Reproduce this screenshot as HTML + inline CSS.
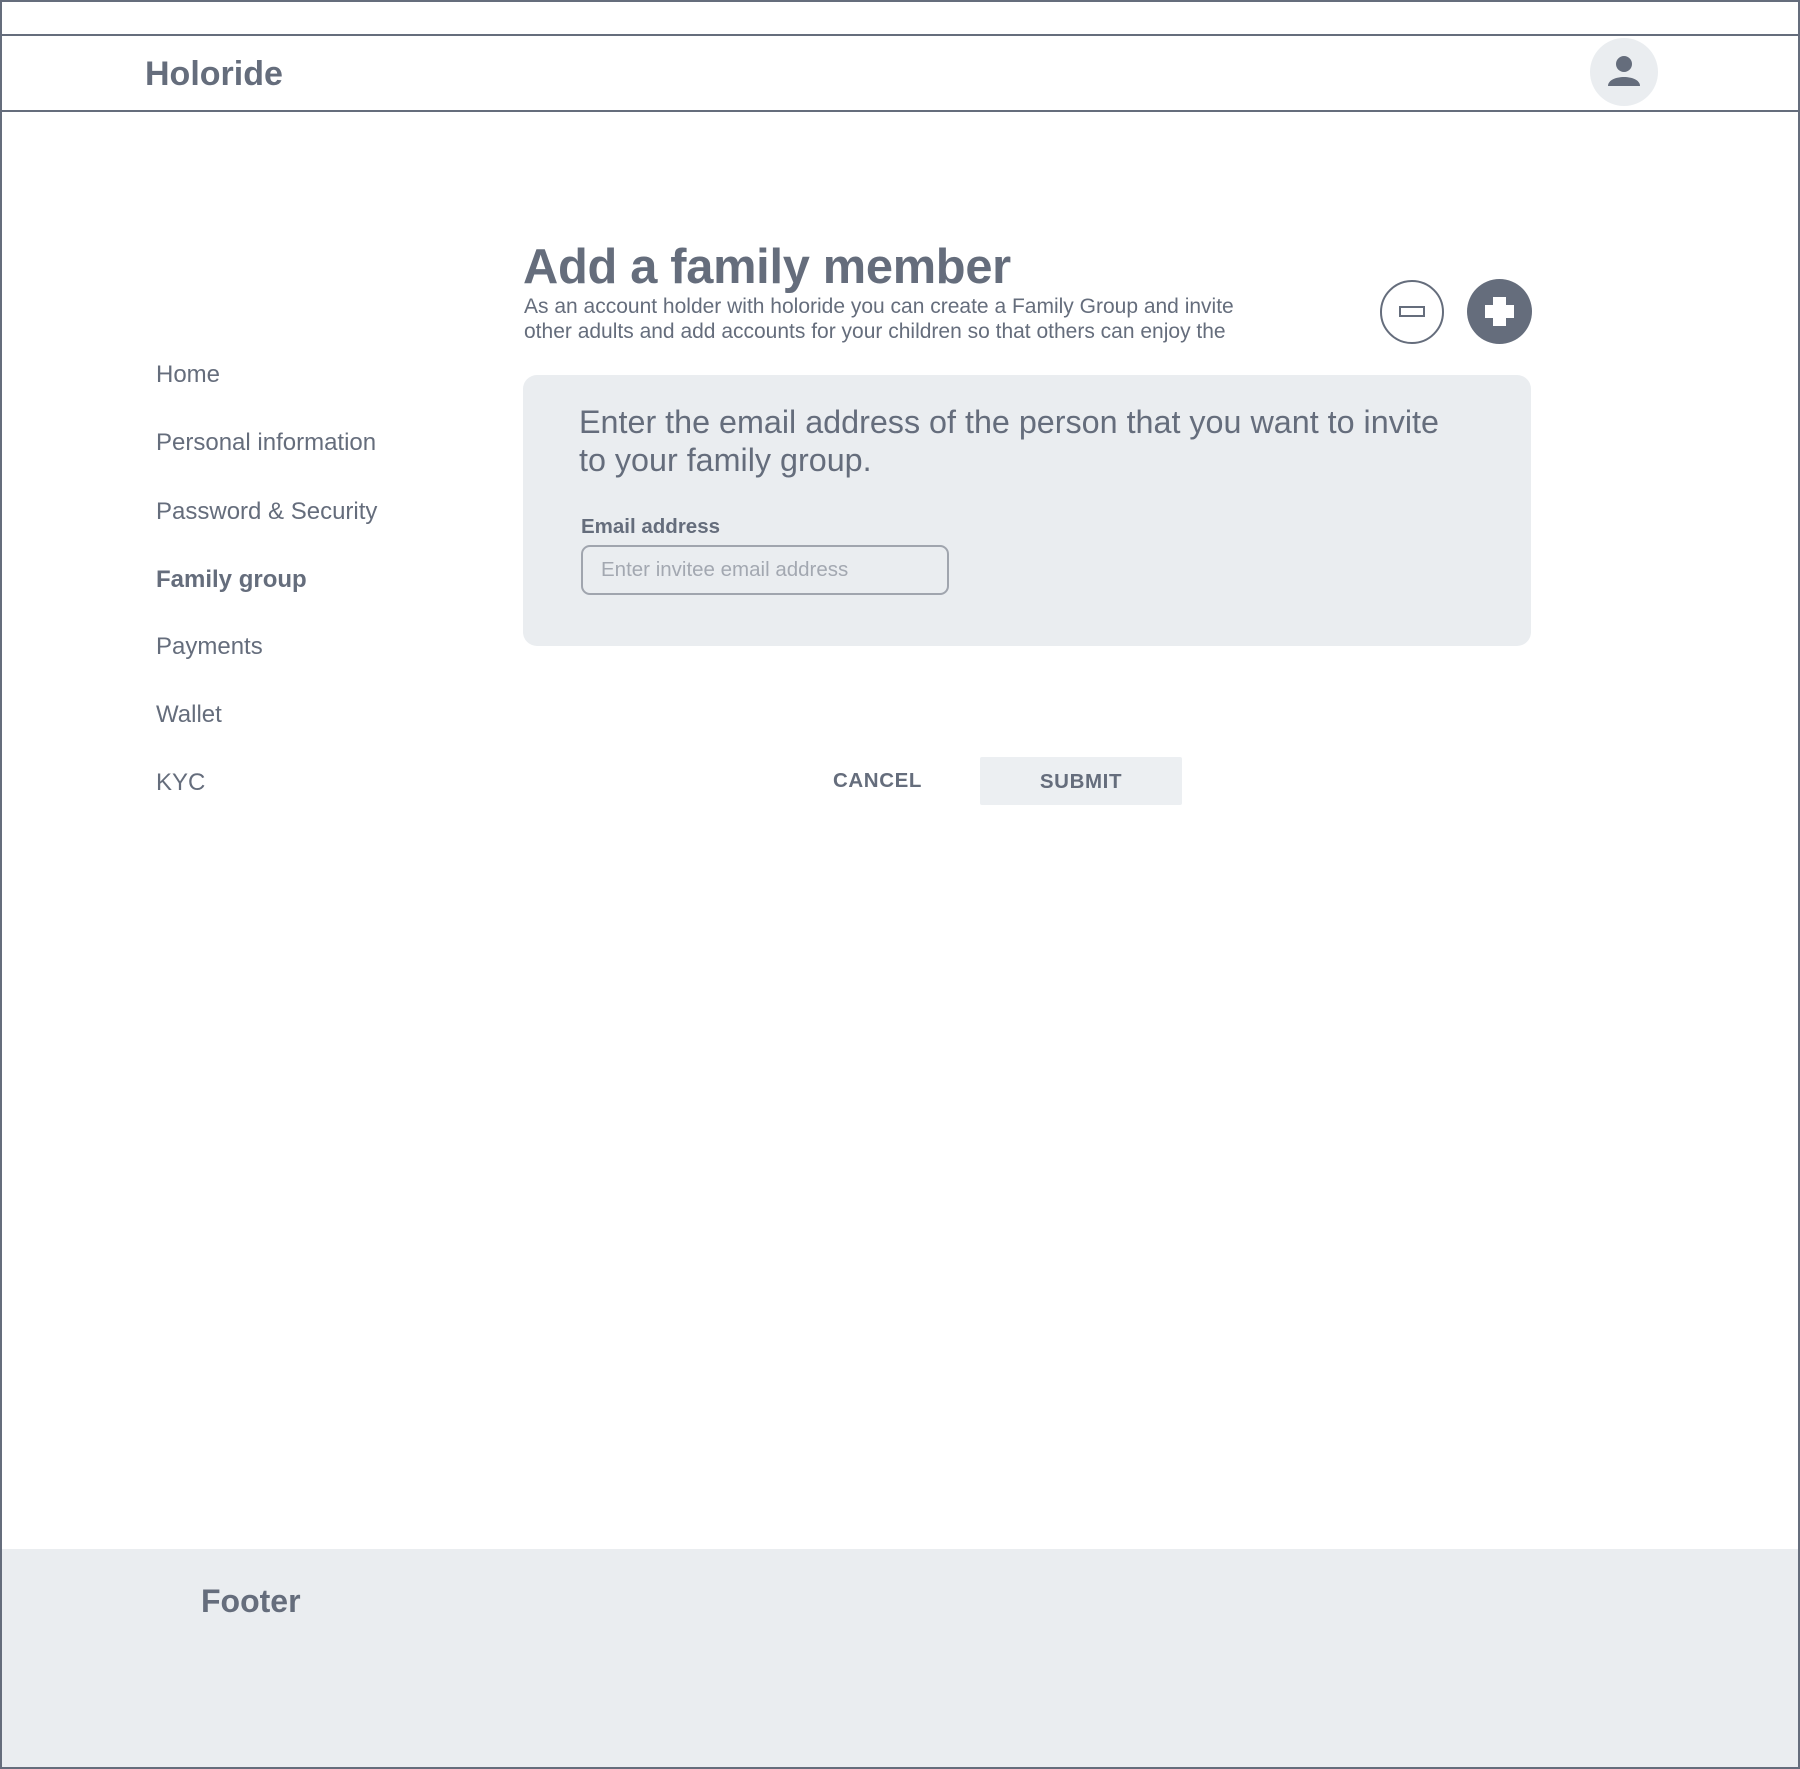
<!DOCTYPE html>
<html><head><meta charset="utf-8"><style>
*{margin:0;padding:0;box-sizing:border-box}
body{width:1800px;height:1769px;position:relative;background:#fff;font-family:"Liberation Sans",Arial,sans-serif;color:#656d7c;overflow:hidden}
.a{position:absolute;white-space:nowrap}
.frame{position:absolute;left:0;top:0;width:1800px;height:1769px;border:2px solid #656d7c}
.hl{position:absolute;left:0;width:1800px;height:2px;background:#656d7c}
.nav{position:absolute;left:156px;font-size:24px;line-height:28px}
</style></head><body>
<div class="a" style="left:0;top:1549px;width:1800px;height:220px;background:#eaedf0"></div>
<div class="frame"></div>
<div class="hl" style="top:34px"></div>
<div class="hl" style="top:110px"></div>
<div class="a" style="left:145px;top:54px;font-size:34px;font-weight:bold;line-height:40px">Holoride</div>
<div class="a" style="left:1590px;top:38px;width:68px;height:68px;border-radius:50%;background:#eaedf0"></div>
<svg class="a" style="left:1604px;top:52px" width="40" height="40" viewBox="0 0 40 40"><circle cx="20" cy="12" r="8" fill="#656d7c"/><path d="M4 34 C4 22 36 22 36 34 Z" fill="#656d7c"/></svg>

<div class="a" style="left:523px;top:239px;font-size:48.8px;font-weight:bold;line-height:56px;letter-spacing:-0.3px">Add a family member</div>
<div class="a" style="left:524px;top:294px;font-size:21px;line-height:25px">As an account holder with holoride you can create a Family Group and invite<br>other adults and add accounts for your children so that others can enjoy the</div>
<div class="a" style="left:1380px;top:280px;width:64px;height:64px;border-radius:50%;border:2px solid #656d7c"></div>
<div class="a" style="left:1399px;top:306px;width:26px;height:11px;border:2px solid #656d7c"></div>
<div class="a" style="left:1467px;top:279px;width:65px;height:65px;border-radius:50%;background:#656d7c"></div>
<div class="a" style="left:1493px;top:297px;width:13px;height:29px;background:#fff"></div>
<div class="a" style="left:1485px;top:305px;width:29px;height:13px;background:#fff"></div>

<div class="nav" style="top:361px">Home</div>
<div class="nav" style="top:429px">Personal information</div>
<div class="nav" style="top:498px">Password &amp; Security</div>
<div class="nav" style="top:566px;font-weight:bold">Family group</div>
<div class="nav" style="top:633px">Payments</div>
<div class="nav" style="top:701px">Wallet</div>
<div class="nav" style="top:769px">KYC</div>

<div class="a" style="left:523px;top:375px;width:1008px;height:271px;background:#eaedf0;border-radius:14px"></div>
<div class="a" style="left:579px;top:403px;font-size:32.3px;line-height:38px">Enter the email address of the person that you want to invite<br>to your family group.</div>
<div class="a" style="left:581px;top:514px;font-size:20.5px;font-weight:bold;line-height:26px">Email address</div>
<div class="a" style="left:581px;top:545px;width:368px;height:50px;border:2px solid #a0a5ae;border-radius:9px"></div>
<div class="a" style="left:601px;top:558px;font-size:20.5px;line-height:24px;color:#a3a8b1">Enter invitee email address</div>

<div class="a" style="left:833px;top:769px;font-size:20.5px;font-weight:bold;line-height:24px;letter-spacing:0.6px">CANCEL</div>
<div class="a" style="left:980px;top:757px;width:202px;height:48px;background:#eceff2;border-radius:2px"></div>
<div class="a" style="left:980px;top:770px;width:202px;text-align:center;font-size:20.5px;font-weight:bold;line-height:24px;letter-spacing:0.6px">SUBMIT</div>

<div class="a" style="left:201px;top:1582px;font-size:32px;font-weight:bold;line-height:38px">Footer</div>
</body></html>
